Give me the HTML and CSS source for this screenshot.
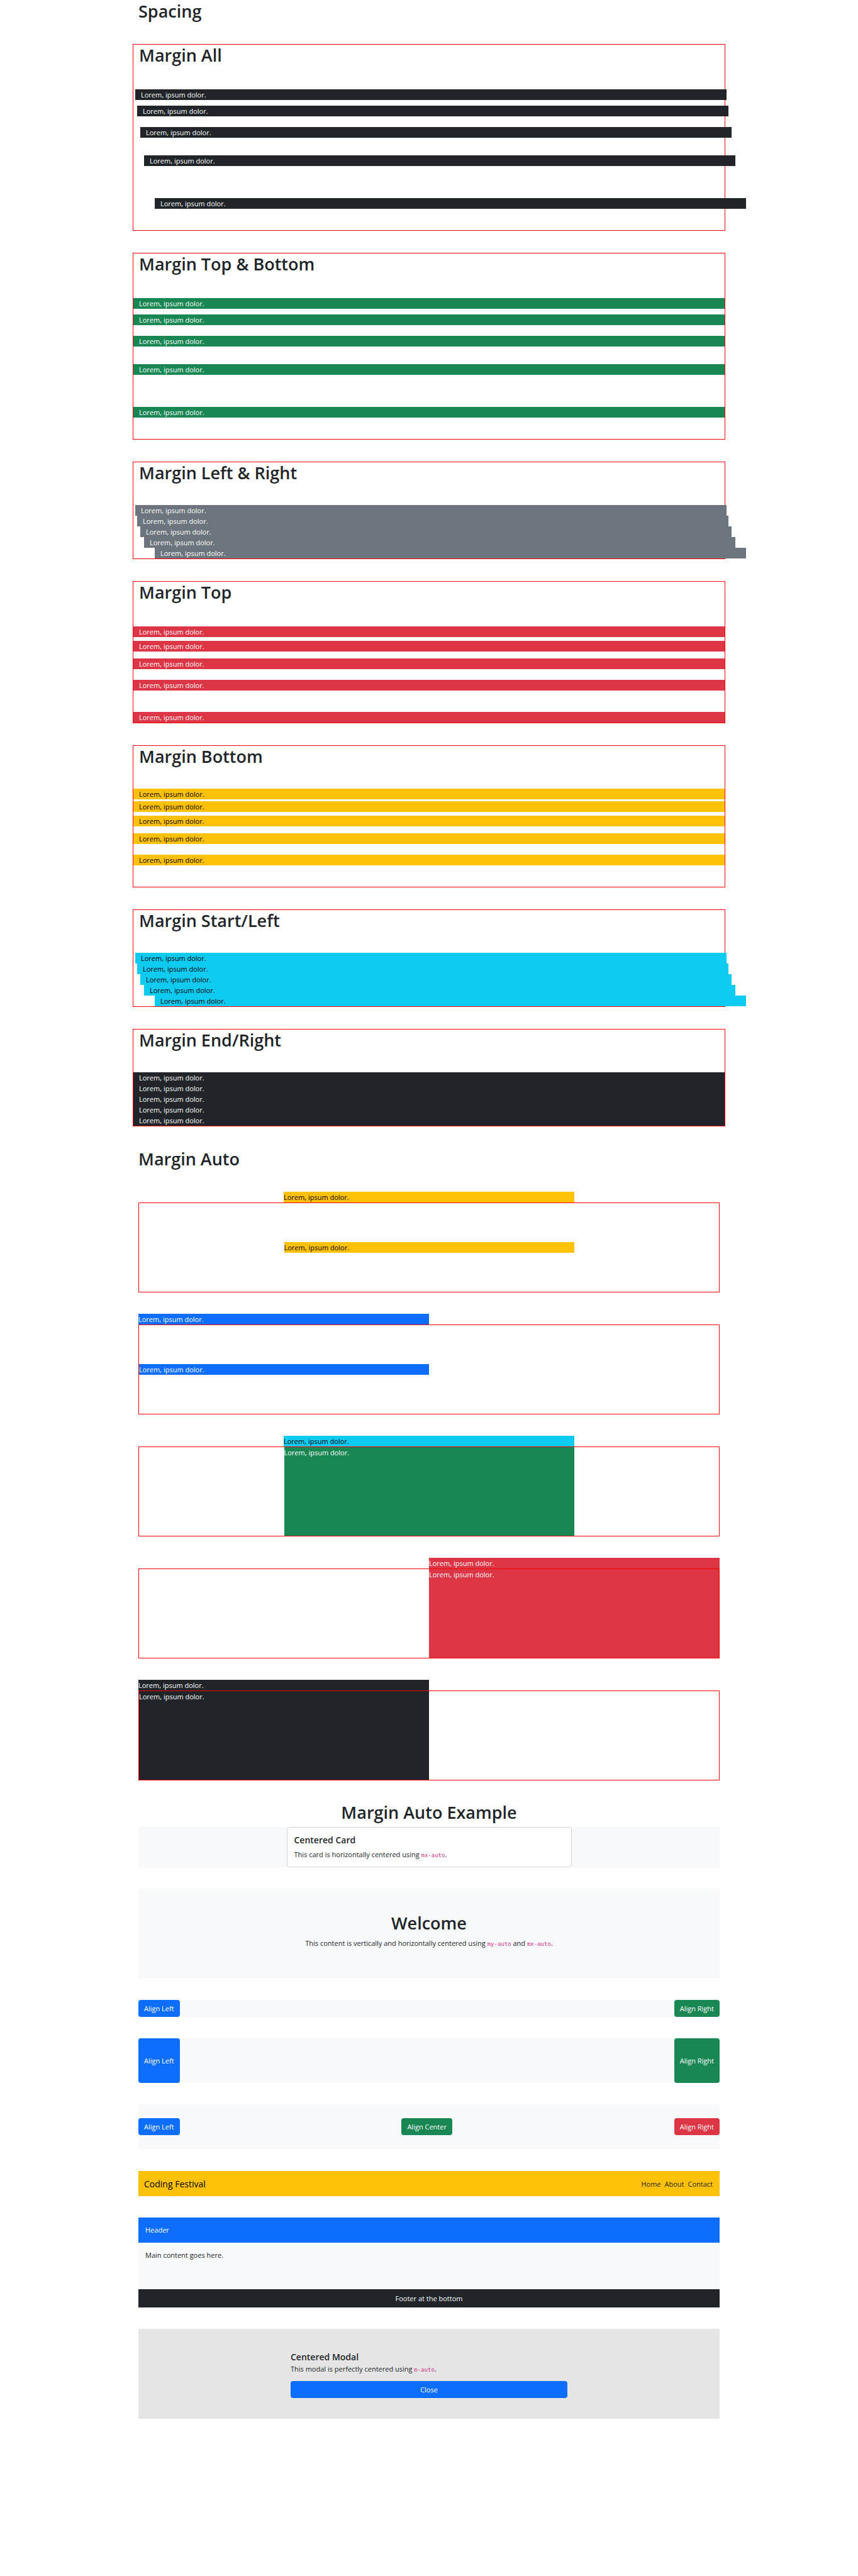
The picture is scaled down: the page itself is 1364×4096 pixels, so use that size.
FILE: index.html
```html
<!DOCTYPE html>
<html lang="en">
<head>
  <meta charset="utf-8">
  <meta name="viewport" content="width=device-width, initial-scale=1">
  <title>Spacing</title>
  <link rel="stylesheet" href="styles.css">
</head>
<body>
  <main class="container">
    <h1 class="title">Spacing</h1>

    <section class="row">
      <h1>Margin All</h1>
      <div class="bar dark m-1">Lorem, ipsum dolor.</div>
      <div class="bar dark m-2">Lorem, ipsum dolor.</div>
      <div class="bar dark m-3">Lorem, ipsum dolor.</div>
      <div class="bar dark m-4">Lorem, ipsum dolor.</div>
      <div class="bar dark m-5">Lorem, ipsum dolor.</div>
    </section>

    <section class="row">
      <h1>Margin Top &amp; Bottom</h1>
      <div class="bar green my-1">Lorem, ipsum dolor.</div>
      <div class="bar green my-2">Lorem, ipsum dolor.</div>
      <div class="bar green my-3">Lorem, ipsum dolor.</div>
      <div class="bar green my-4">Lorem, ipsum dolor.</div>
      <div class="bar green my-5">Lorem, ipsum dolor.</div>
    </section>

    <section class="row">
      <h1>Margin Left &amp; Right</h1>
      <div class="bar gray mx-1">Lorem, ipsum dolor.</div>
      <div class="bar gray mx-2">Lorem, ipsum dolor.</div>
      <div class="bar gray mx-3">Lorem, ipsum dolor.</div>
      <div class="bar gray mx-4">Lorem, ipsum dolor.</div>
      <div class="bar gray mx-5">Lorem, ipsum dolor.</div>
    </section>

    <section class="row">
      <h1>Margin Top</h1>
      <div class="bar red mt-1">Lorem, ipsum dolor.</div>
      <div class="bar red mt-2">Lorem, ipsum dolor.</div>
      <div class="bar red mt-3">Lorem, ipsum dolor.</div>
      <div class="bar red mt-4">Lorem, ipsum dolor.</div>
      <div class="bar red mt-5">Lorem, ipsum dolor.</div>
    </section>

    <section class="row">
      <h1>Margin Bottom</h1>
      <div class="bar yellow mb-1">Lorem, ipsum dolor.</div>
      <div class="bar yellow mb-2">Lorem, ipsum dolor.</div>
      <div class="bar yellow mb-3">Lorem, ipsum dolor.</div>
      <div class="bar yellow mb-4">Lorem, ipsum dolor.</div>
      <div class="bar yellow mb-5">Lorem, ipsum dolor.</div>
    </section>

    <section class="row">
      <h1>Margin Start/Left</h1>
      <div class="bar cyan ms-1">Lorem, ipsum dolor.</div>
      <div class="bar cyan ms-2">Lorem, ipsum dolor.</div>
      <div class="bar cyan ms-3">Lorem, ipsum dolor.</div>
      <div class="bar cyan ms-4">Lorem, ipsum dolor.</div>
      <div class="bar cyan ms-5">Lorem, ipsum dolor.</div>
    </section>

    <section class="row">
      <h1>Margin End/Right</h1>
      <div class="bar dark me-1">Lorem, ipsum dolor.</div>
      <div class="bar dark me-2">Lorem, ipsum dolor.</div>
      <div class="bar dark me-3">Lorem, ipsum dolor.</div>
      <div class="bar dark me-4">Lorem, ipsum dolor.</div>
      <div class="bar dark me-5">Lorem, ipsum dolor.</div>
    </section>

    <h1 class="title">Margin Auto</h1>

    <div class="half yellow mx-auto">Lorem, ipsum dolor.</div>
    <div class="box">
      <div class="half yellow m-auto">Lorem, ipsum dolor.</div>
    </div>

    <div class="half blue my-auto">Lorem, ipsum dolor.</div>
    <div class="box">
      <div class="half blue my-auto">Lorem, ipsum dolor.</div>
    </div>

    <div class="half cyan mx-auto">Lorem, ipsum dolor.</div>
    <div class="box">
      <div class="half green mx-auto">Lorem, ipsum dolor.</div>
    </div>

    <div class="half red ms-auto">Lorem, ipsum dolor.</div>
    <div class="box">
      <div class="half red ms-auto">Lorem, ipsum dolor.</div>
    </div>

    <div class="half dark me-auto">Lorem, ipsum dolor.</div>
    <div class="box">
      <div class="half dark me-auto">Lorem, ipsum dolor.</div>
    </div>

    <h1 class="example-title">Margin Auto Example</h1>

    <section class="panel card-panel">
      <article class="card">
        <h2 class="card-title">Centered Card</h2>
        <p>This card is horizontally centered using <code>mx-auto</code>.</p>
      </article>
    </section>

    <section class="panel hero">
      <div class="hero-content">
        <h1>Welcome</h1>
        <p>This content is vertically and horizontally centered using <code>my-auto</code> and <code>mx-auto</code>.</p>
      </div>
    </section>

    <div class="panel buttons">
      <button type="button" class="btn blue">Align Left</button>
      <button type="button" class="btn green ms-auto">Align Right</button>
    </div>

    <div class="panel buttons tall">
      <button type="button" class="btn blue">Align Left</button>
      <button type="button" class="btn green ms-auto">Align Right</button>
    </div>

    <div class="panel buttons tall centered">
      <button type="button" class="btn blue">Align Left</button>
      <button type="button" class="btn green mx-auto">Align Center</button>
      <button type="button" class="btn red">Align Right</button>
    </div>

    <nav class="navbar yellow">
      <a class="brand" href="#">Coding Festival</a>
      <div class="links ms-auto">
        <a href="#">Home</a>
        <a href="#">About</a>
        <a href="#">Contact</a>
      </div>
    </nav>

    <section class="panel layout">
      <header class="layout-header blue">Header</header>
      <div class="layout-main">Main content goes here.</div>
      <footer class="layout-footer dark">Footer at the bottom</footer>
    </section>

    <section class="backdrop">
      <div class="modal m-auto">
        <h2 class="modal-title">Centered Modal</h2>
        <p>This modal is perfectly centered using <code>m-auto</code>.</p>
        <button type="button" class="btn blue">Close</button>
      </div>
    </section>
  </main>
</body>
</html>
```
FILE: styles.css
```css
*,
*::before,
*::after {
  box-sizing: border-box;
}

:root {
  --s1: 3px;
  --s2: 6px;
  --s3: 11px;
  --s4: 17px;
  --s5: 34px;
}

body {
  margin: 0;
  background: #fff;
  color: #212529;
  font: 400 11px/17px "Segoe UI", "Open Sans", "Noto Sans", sans-serif;
}

h1,
h2,
p {
  margin: 0;
}

h1 {
  font-size: 27px;
  font-weight: 600;
  line-height: 34px;
}

h2 {
  font-size: 14px;
  font-weight: 600;
  line-height: 17px;
}

code {
  color: #d63384;
  font: 9px "DejaVu Sans Mono", "Liberation Mono", monospace;
}

.container {
  max-width: 942px;
  margin: 0 auto;
  padding: 1px 9px 0;
}

.title {
  margin-bottom: 35px;
}

/* Full-width demo rows */
.row {
  display: flex;
  flex-wrap: wrap;
  margin: 0 -9px 35px;
  border: 1px solid red;
}

.row h1 {
  flex: 0 0 100%;
  margin-bottom: var(--s5);
  padding: 0 9px;
}

.bar {
  flex: 0 0 100%;
  padding: 0 9px;
}

/* Colours */
.dark { background: #212529; color: #fff; }
.green { background: #198754; color: #fff; }
.gray { background: #6c757d; color: #fff; }
.red { background: #dc3545; color: #fff; }
.blue { background: #0d6efd; color: #fff; }
.yellow { background: #ffc107; color: #000; }
.cyan { background: #0dcaf0; color: #000; }

/* Margin utilities */
.m-1 { margin: var(--s1); }
.m-2 { margin: var(--s2); }
.m-3 { margin: var(--s3); }
.m-4 { margin: var(--s4); }
.m-5 { margin: var(--s5); }
.my-1 { margin-block: var(--s1); }
.my-2 { margin-block: var(--s2); }
.my-3 { margin-block: var(--s3); }
.my-4 { margin-block: var(--s4); }
.my-5 { margin-block: var(--s5); }
.mx-1 { margin-inline: var(--s1); }
.mx-2 { margin-inline: var(--s2); }
.mx-3 { margin-inline: var(--s3); }
.mx-4 { margin-inline: var(--s4); }
.mx-5 { margin-inline: var(--s5); }
.mt-1 { margin-top: var(--s1); }
.mt-2 { margin-top: var(--s2); }
.mt-3 { margin-top: var(--s3); }
.mt-4 { margin-top: var(--s4); }
.mt-5 { margin-top: var(--s5); }
.mb-1 { margin-bottom: var(--s1); }
.mb-2 { margin-bottom: var(--s2); }
.mb-3 { margin-bottom: var(--s3); }
.mb-4 { margin-bottom: var(--s4); }
.mb-5 { margin-bottom: var(--s5); }
.ms-1 { margin-left: var(--s1); }
.ms-2 { margin-left: var(--s2); }
.ms-3 { margin-left: var(--s3); }
.ms-4 { margin-left: var(--s4); }
.ms-5 { margin-left: var(--s5); }
.me-1 { margin-right: var(--s1); }
.me-2 { margin-right: var(--s2); }
.me-3 { margin-right: var(--s3); }
.me-4 { margin-right: var(--s4); }
.me-5 { margin-right: var(--s5); }
.m-auto { margin: auto; }
.mx-auto { margin-inline: auto; }
.my-auto { margin-block: auto; }
.ms-auto { margin-left: auto; }
.me-auto { margin-right: auto; }

/* Auto margin boxes */
.half {
  width: 50%;
}

.box {
  display: flex;
  height: 143px;
  margin-bottom: var(--s5);
  border: 1px solid red;
}

/* Examples */
.example-title {
  margin-bottom: var(--s2);
  text-align: center;
}

.panel {
  margin-bottom: var(--s5);
  background: #f8f9fa;
}

.card-panel {
  padding: 0 9px;
}

.card {
  width: 50%;
  margin: 0 auto;
  padding: 11px;
  border: 1px solid #d3d4d5;
  border-radius: 4px;
  background: #fff;
}

.card-title {
  margin-bottom: var(--s2);
}

.hero {
  display: flex;
  height: 143px;
}

.hero-content {
  margin: auto;
  text-align: center;
}

.hero-content h1 {
  margin-bottom: var(--s2);
}

.hero-content p,
.modal p {
  margin-bottom: var(--s3);
}

.buttons {
  display: flex;
}

.tall {
  height: 71px;
}

.centered {
  align-items: center;
  margin-bottom: 35px;
}

.btn {
  padding: 5px 9px;
  border: 0;
  border-radius: 4px;
  font: inherit;
  cursor: pointer;
}

.navbar {
  display: flex;
  align-items: center;
  min-height: 40px;
  margin-bottom: var(--s5);
  padding: 0 11px 0 9px;
}

.navbar a {
  color: #212529;
  text-decoration: none;
}

.navbar .brand {
  color: #000;
  font-size: 14px;
}

.links {
  display: flex;
  gap: 6px;
}

.layout {
  display: flex;
  flex-direction: column;
  height: 143px;
}

.layout-header {
  padding: 11px;
  line-height: 18px;
}

.layout-main {
  flex: 1;
  padding: 11px;
}

.layout-footer {
  padding: 6px;
  text-align: center;
}

.backdrop {
  display: flex;
  height: 143px;
  margin-bottom: var(--s5);
  background: #e5e5e5;
}

.modal {
  width: 50%;
  padding: 11px;
}

.modal-title {
  line-height: 21px;
}

.modal .btn {
  width: 100%;
}
```
